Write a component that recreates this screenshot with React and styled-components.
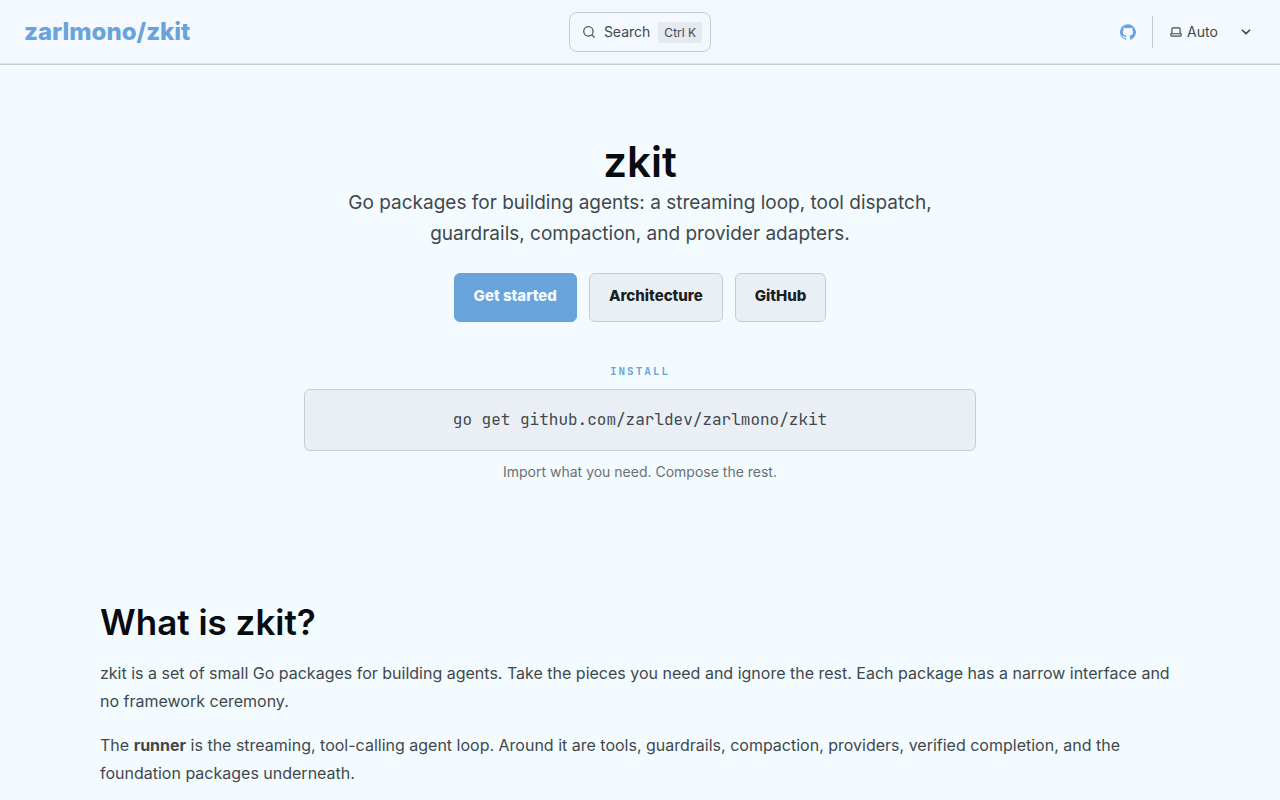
import React from 'react'
import styled, { createGlobalStyle } from 'styled-components'

const GlobalStyle = createGlobalStyle`
  :root {
    --accent: #68a3dc;
    --bg: #f3fbff;
    --bg-nav: #f4f9ff;
    --bg-raised: #eaeff6;
    --line: #c5cdd2;
    --heading: #080c10;
    --text: #41484d;
    --text-muted: #697177;
    --font: Inter, "Liberation Sans", sans-serif;
    --font-mono: "JetBrains Mono", "DejaVu Sans Mono", monospace;
  }

  *, *::before, *::after {
    box-sizing: border-box;
  }

  body {
    margin: 0;
    background: var(--bg);
    color: var(--text);
    font-family: var(--font);
    font-size: 16px;
    line-height: 28px;
  }

  h1, h2, p, pre {
    margin: 0;
  }
`

const Header = styled.header`
  display: grid;
  grid-template-columns: 1fr auto 1fr;
  align-items: center;
  height: 65px;
  padding: 0 24px;
  background: var(--bg-nav);
  border-bottom: 1px solid var(--line);
  box-shadow: inset 0 -1px 0 #e0e6eb;
`

const SiteTitle = styled.a`
  justify-self: start;
  color: var(--accent);
  font-size: 24px;
  font-weight: 800;
  text-decoration: none;
`

const SearchButton = styled.button`
  display: flex;
  align-items: center;
  gap: 8px;
  height: 40px;
  padding: 0 8px 0 12px;
  border: 1px solid var(--line);
  border-radius: 8px;
  background: var(--bg-nav);
  color: var(--text);
  font-family: inherit;
  font-size: 14px;
  line-height: 24px;
  cursor: pointer;
`

const Shortcut = styled.kbd`
  padding: 0 6px;
  border-radius: 3px;
  background: #e6eaf0;
  font-family: inherit;
  font-size: 12px;
  line-height: 21px;
`

const HeaderTools = styled.div`
  display: flex;
  align-items: center;
  justify-self: end;
  gap: 16px;
`

const SocialLink = styled.a`
  display: flex;
  color: var(--accent);
`

const ThemePicker = styled.label`
  display: flex;
  align-items: center;
  gap: 4px;
  height: 32px;
  padding-left: 16px;
  border-left: 1px solid var(--line);
`

const ThemeSelect = styled.select`
  appearance: none;
  width: 45px;
  padding: 0;
  border: 0;
  background: transparent;
  color: var(--text);
  font-family: inherit;
  font-size: 14px;
  line-height: 24px;
  cursor: pointer;
`

const Svg = styled.svg`
  flex: none;
  width: ${({ $size }) => $size}px;
  height: ${({ $size }) => $size}px;
  fill: currentColor;
`

const Main = styled.main`
  padding: 72px 24px 64px;
`

const Hero = styled.section`
  display: flex;
  flex-direction: column;
  align-items: center;
  max-width: 672px;
  margin: 0 auto;
  text-align: center;
`

const HeroTitle = styled.h1`
  color: var(--heading);
  font-size: 42px;
  font-weight: 600;
  line-height: 50px;
`

const Tagline = styled.p`
  max-width: 608px;
  font-size: 19px;
  line-height: 31px;
`

const Actions = styled.div`
  display: flex;
  flex-wrap: wrap;
  justify-content: center;
  gap: 12px;
  margin-top: 24px;
`

const ActionLink = styled.a`
  padding: 8px 19px 12px;
  border: 1px solid ${({ $primary }) => ($primary ? 'var(--accent)' : 'var(--line)')};
  border-radius: 6px;
  background: ${({ $primary }) => ($primary ? 'var(--accent)' : 'var(--bg-raised)')};
  color: ${({ $primary }) => ($primary ? '#f3fbff' : '#1a1f23')};
  font-size: 15px;
  font-weight: 800;
  line-height: 27px;
  text-decoration: none;
`

const InstallLabel = styled.p`
  margin-top: 40px;
  color: var(--accent);
  font-family: var(--font-mono);
  font-size: 11px;
  font-weight: 700;
  letter-spacing: 2px;
  line-height: 19px;
`

const Command = styled.pre`
  width: 100%;
  margin-top: 8px;
  padding: 16px;
  border: 1px solid var(--line);
  border-radius: 6px;
  background: var(--bg-raised);
  font-family: var(--font-mono);
  font-size: 16px;
  line-height: 28px;
`

const Note = styled.p`
  margin-top: 8px;
  color: var(--text-muted);
  font-size: 14px;
  line-height: 26px;
`

const About = styled.section`
  max-width: 1080px;
  margin: 117px auto 0;

  p {
    margin-top: 16px;
  }
`

const SectionTitle = styled.h2`
  color: var(--heading);
  font-size: 35px;
  font-weight: 600;
  line-height: 41px;
`

const icons = {
  search:
    'M21.71 20.29 18 16.61A9 9 0 1 0 16.61 18l3.68 3.68a.999.999 0 0 0 1.42 0 1 1 0 0 0 0-1.39ZM11 18a7 7 0 1 1 0-14 7 7 0 0 1 0 14Z',
  github:
    'M12 .3a12 12 0 0 0-3.8 23.38c.6.12.83-.26.83-.57L9 21.07c-3.34.72-4.04-1.61-4.04-1.61-.55-1.39-1.34-1.76-1.34-1.76-1.08-.74.09-.73.09-.73 1.2.09 1.83 1.24 1.83 1.24 1.08 1.83 2.81 1.3 3.5 1 .1-.78.42-1.31.76-1.61-2.67-.3-5.47-1.33-5.47-5.93 0-1.31.47-2.38 1.24-3.22-.14-.3-.54-1.52.1-3.18 0 0 1-.32 3.3 1.23a11.5 11.5 0 0 1 6 0c2.28-1.55 3.29-1.23 3.29-1.23.64 1.66.24 2.88.12 3.18a4.65 4.65 0 0 1 1.23 3.22c0 4.61-2.8 5.63-5.48 5.92.42.36.81 1.1.81 2.22l-.01 3.29c0 .31.2.69.82.57A12 12 0 0 0 12 .3Z',
  laptop:
    'M21 14h-1V7a3 3 0 0 0-3-3H7a3 3 0 0 0-3 3v7H3a1 1 0 0 0-1 1v2a3 3 0 0 0 3 3h14a3 3 0 0 0 3-3v-2a1 1 0 0 0-1-1ZM6 7a1 1 0 0 1 1-1h10a1 1 0 0 1 1 1v7H6V7Zm14 10a1 1 0 0 1-1 1H5a1 1 0 0 1-1-1v-1h16v1Z',
  caret:
    'M17 9.17a1 1 0 0 0-1.41 0L12 12.71 8.46 9.17a1 1 0 1 0-1.41 1.42l4.24 4.24a1.002 1.002 0 0 0 1.42 0L17 10.59a1.002 1.002 0 0 0 0-1.42Z',
}

const Icon = ({ name, size = 16 }) => (
  <Svg $size={size} viewBox="0 0 24 24" aria-hidden="true">
    <path d={icons[name]} />
  </Svg>
)

const actions = [
  { label: 'Get started', href: '#get-started', primary: true },
  { label: 'Architecture', href: '#architecture' },
  { label: 'GitHub', href: '#github' },
]

const App = () => (
  <>
    <GlobalStyle />
    <Header>
      <SiteTitle href="#top">zarlmono/zkit</SiteTitle>
      <SearchButton type="button">
        <Icon name="search" size={14} />
        <span>Search</span>
        <Shortcut>Ctrl K</Shortcut>
      </SearchButton>
      <HeaderTools>
        <SocialLink href="#github" aria-label="GitHub">
          <Icon name="github" />
        </SocialLink>
        <ThemePicker>
          <Icon name="laptop" size={14} />
          <ThemeSelect aria-label="Select theme" defaultValue="auto">
            <option value="dark">Dark</option>
            <option value="light">Light</option>
            <option value="auto">Auto</option>
          </ThemeSelect>
          <Icon name="caret" size={20} />
        </ThemePicker>
      </HeaderTools>
    </Header>
    <Main>
      <Hero>
        <HeroTitle>zkit</HeroTitle>
        <Tagline>
          Go packages for building agents: a streaming loop, tool dispatch, guardrails, compaction, and provider
          adapters.
        </Tagline>
        <Actions>
          {actions.map(({ label, href, primary }) => (
            <ActionLink key={label} href={href} $primary={primary}>
              {label}
            </ActionLink>
          ))}
        </Actions>
        <InstallLabel>INSTALL</InstallLabel>
        <Command>
          go get github.com/zarldev/zarlmono/zkit
        </Command>
        <Note>Import what you need. Compose the rest.</Note>
      </Hero>
      <About>
        <SectionTitle>What is zkit?</SectionTitle>
        <p>
          zkit is a set of small Go packages for building agents. Take the pieces you need and ignore the rest. Each
          package has a narrow interface and no framework ceremony.
        </p>
        <p>
          The <strong>runner</strong> is the streaming, tool-calling agent loop. Around it are tools, guardrails,
          compaction, providers, verified completion, and the foundation packages underneath.
        </p>
      </About>
    </Main>
  </>
)

export default App
